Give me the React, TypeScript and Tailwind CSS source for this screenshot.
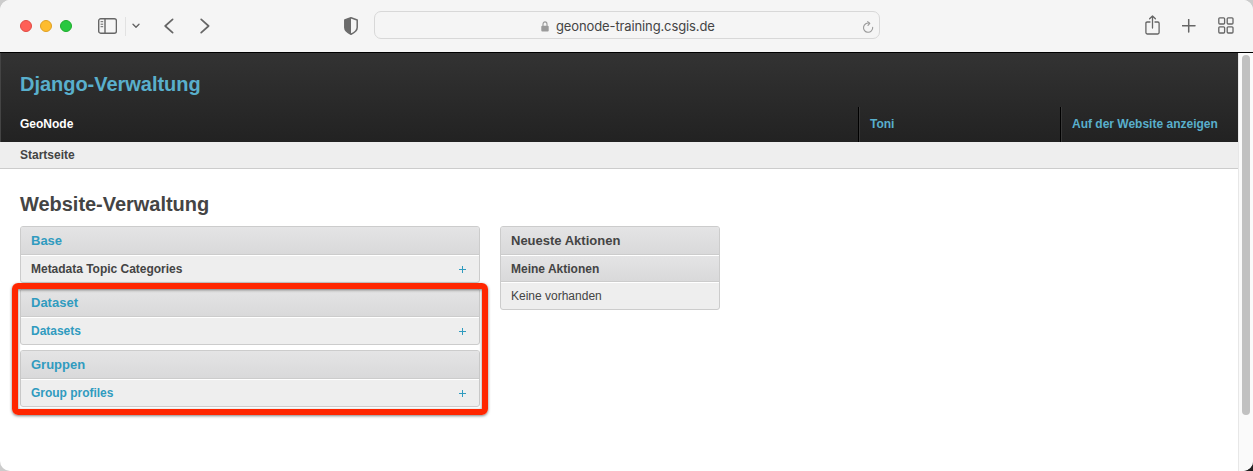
import React from "react";

const stroke = {
  fill: "none",
  stroke: "#666666",
  strokeWidth: 1.5,
  strokeLinecap: "round" as const,
  strokeLinejoin: "round" as const,
};

function SidebarIcon() {
  return (
    <svg className="ml-[26px] h-4 w-[19px] shrink-0" viewBox="0 0 19 16" {...stroke} strokeWidth={1.4}>
      <rect x="0.7" y="0.8" width="17.7" height="14.4" rx="2" />
      <path d="M7 1V15" />
      <path d="M3 3.7H4.8M3 6.2H4.8M3 8.7H4.8" strokeWidth="1" />
    </svg>
  );
}

function ShieldIcon() {
  return (
    <svg className="ml-[134px] h-[18px] w-[14px] shrink-0" viewBox="0 0 14 18">
      <path d="M7 0.8L13.2 3V10.5C13.2 13.3 10 15.8 7 17.2C4 15.8 0.8 13.3 0.8 10.5V3Z" fill="none" stroke="#6b6b6b" strokeWidth="1.5" strokeLinejoin="round" />
      <path d="M7 0.8V17.2C4 15.8 0.8 13.3 0.8 10.5V3Z" fill="#6b6b6b" />
    </svg>
  );
}

function Toolbar() {
  return (
    <div className="flex h-[53px] shrink-0 items-center border-b border-black bg-[#f5f5f5] pl-5">
      <div className="flex gap-2">
        <span className="size-3 rounded-full border border-[#e14b43] bg-[#ff5f57]" />
        <span className="size-3 rounded-full border border-[#dfa023] bg-[#febc2e]" />
        <span className="size-3 rounded-full border border-[#1dad2b] bg-[#28c840]" />
      </div>
      <SidebarIcon />
      <span className="ml-2 h-[19px] w-px bg-[#e2e2e2]" />
      <svg className="ml-[6px] h-[6px] w-[8px] shrink-0" viewBox="0 0 8 6" {...stroke} strokeWidth={1.4}>
        <path d="M1 1.2L4 4.2L7 1.2" />
      </svg>
      <svg className="mt-[-1px] ml-6 h-4 w-[10px] shrink-0" viewBox="0 0 10 16" {...stroke} strokeWidth={1.7}>
        <path d="M8.6 1.3L1.2 8L8.6 14.7" />
      </svg>
      <svg className="mt-[-1px] ml-[26px] h-4 w-[10px] shrink-0" viewBox="0 0 10 16" {...stroke} strokeWidth={1.7}>
        <path d="M1.2 1.3L8.6 8L1.2 14.7" />
      </svg>
      <ShieldIcon />
      <div className="mt-[-2px] ml-4 flex h-7 w-[506px] shrink-0 items-center rounded-[7px] border border-[#d8d8d8] pt-0.5 pr-[5px] pl-[166px]">
        <svg className="h-[11px] w-2 shrink-0" viewBox="0 0 8 11">
          <path d="M2 5V3.2C2 0.1 6 0.1 6 3.2V5" fill="none" stroke="#9b9b9b" strokeWidth="1.1" />
          <rect x="0.3" y="4.8" width="7.4" height="5.8" rx="1" fill="#9b9b9b" />
        </svg>
        <span className="ml-[7px] whitespace-nowrap font-['Inter',sans-serif] text-[13px] leading-4 tracking-[-0.12px] text-[#444444]">geonode-training.csgis.de</span>
        <svg className="mt-px ml-auto h-3 w-3 shrink-0" viewBox="0 0 12 12" {...stroke} stroke="#999999" strokeWidth={1.1}>
          <path d="M10.7 6.3A4.6 4.6 0 1 1 7.5 2.3" />
          <path d="M5.7 0.6L7.8 2.4L6 4.4" />
        </svg>
      </div>
      <svg className="mt-[-3px] ml-[265px] h-5 w-[15px] shrink-0" viewBox="0 0 15 20" {...stroke} strokeWidth={1.3}>
        <path d="M5 7H2.2Q0.9 7 0.9 8.3V17.6Q0.9 19 2.2 19H12.8Q14.1 19 14.1 17.6V8.3Q14.1 7 12.8 7H10" />
        <path d="M7.5 13V1.2M4.6 3.8L7.5 1L10.4 3.8" />
      </svg>
      <svg className="ml-[22px] size-[14px] shrink-0" viewBox="0 0 14 14" {...stroke} strokeWidth={1.5}>
        <path d="M6.7 0.4V13M0.4 6.7H13" />
      </svg>
      <svg className="mt-[-1px] ml-[22px] h-[17px] w-4 shrink-0" viewBox="0 0 16 17" {...stroke} strokeWidth={1.3}>
        <rect x="0.8" y="0.8" width="5.8" height="6.2" rx="1" />
        <rect x="9.2" y="0.8" width="5.8" height="6.2" rx="1" />
        <rect x="0.8" y="9.8" width="5.8" height="6.2" rx="1" />
        <rect x="9.2" y="9.8" width="5.8" height="6.2" rx="1" />
      </svg>
    </div>
  );
}

function Header() {
  return (
    <header className="flex h-[89px] flex-col border-l border-[#444444] bg-linear-to-b from-[#333333] to-[#222222] font-bold">
      <div className="h-[54px] pt-[19px] pl-[19px] text-[20px] leading-6 tracking-[-0.03px] text-[#59afcc]">Django-Verwaltung</div>
      <div className="flex h-[35px] text-[12px] leading-[35px]">
        <span className="flex-1 pl-[19px] text-white">GeoNode</span>
        <a className="w-[202px] border-l border-black pl-[11px] text-[#59afcc] shadow-[inset_1px_0_0_#383838]">Toni</a>
        <a className="w-[178px] border-l border-black pl-[11px] text-[#59afcc] shadow-[inset_1px_0_0_#383838]">Auf der Website anzeigen</a>
      </div>
    </header>
  );
}

function PanelTitle({ children, link }: { children: string; link?: boolean }) {
  return (
    <h2
      className={`h-7 border-b border-[#cccccc] bg-linear-to-b from-[#e4e4e5] to-[#d9d9da] pl-[10px] text-[13px] leading-[27px] font-bold ${
        link ? "text-[#309bbf]" : "text-[#444444]"
      }`}
    >
      {children}
    </h2>
  );
}

function Module({ title, item, link }: { title: string; item: string; link?: boolean }) {
  return (
    <section className="h-[57px] overflow-hidden rounded-[3px] border border-[#cccccc] bg-[#eeeeee]">
      <PanelTitle link>{title}</PanelTitle>
      <div className="flex h-[27px] items-center justify-between border-t border-white pr-[13px] pl-[10px] text-[12px] font-bold">
        <span className={`tracking-[-0.02px] ${link ? "text-[#309bbf]" : "text-[#444444]"}`}>{item}</span>
        <svg className="size-[7px]" viewBox="0 0 7 7">
          <path d="M3.5 0V7M0 3.5H7" stroke="#309bbf" strokeWidth="1" />
        </svg>
      </div>
    </section>
  );
}

export default function App() {
  return (
    <div className="h-[471px] w-[1253px] overflow-hidden bg-linear-to-r from-[#cccccc] from-50% to-[#222222] to-50% font-['Liberation_Sans',Arial,sans-serif] text-[#444444]">
      <div className="h-full bg-linear-to-b from-[#cccccc] from-50% to-transparent to-50%">
        <div className="flex h-full flex-col overflow-hidden rounded-[10px] bg-white">
          <Toolbar />
          <div className="flex flex-1">
            <div className="relative w-[1238px]">
              <Header />
              <div className="h-[27px] border-b border-[#cccccc] bg-[#eeeeee] pl-5 text-[12px] leading-[26px] font-bold">Startseite</div>
              <main className="px-5 pt-[23px]">
                <h1 className="text-[20px] leading-6 font-bold tracking-[-0.03px]">Website-Verwaltung</h1>
                <div className="mt-[10px] flex items-start gap-5">
                  <div className="flex w-[460px] flex-col gap-[5px]">
                    <Module title="Base" item="Metadata Topic Categories" />
                    <Module title="Dataset" item="Datasets" link />
                    <Module title="Gruppen" item="Group profiles" link />
                  </div>
                  <aside className="h-[84px] w-[220px] overflow-hidden rounded-[3px] border border-[#cccccc] bg-[#eeeeee]">
                    <PanelTitle>Neueste Aktionen</PanelTitle>
                    <h3 className="h-[27px] border-t border-b border-t-white border-b-[#cccccc] bg-linear-to-b from-[#e4e4e5] to-[#d9d9da] pl-[10px] text-[12px] leading-[26px] font-bold">Meine Aktionen</h3>
                    <p className="h-[27px] border-t border-white pl-[10px] text-[12px] leading-[26px]">Keine vorhanden</p>
                  </aside>
                </div>
              </main>
              <div className="absolute top-[230px] left-3 h-[132px] w-[476px] rounded-[6px] border-[6px] border-[#ff2600] shadow-[0_1px_3px_rgba(0,0,0,0.5),inset_0_1px_3px_rgba(0,0,0,0.5)]" />
            </div>
            <div className="w-[15px] border-l border-[#e7e7e7] bg-[#fafafa] pt-[2px] pl-[3px]">
              <div className="h-[360px] w-2 rounded-full bg-[#c1c1c1]" />
            </div>
          </div>
        </div>
      </div>
    </div>
  );
}
